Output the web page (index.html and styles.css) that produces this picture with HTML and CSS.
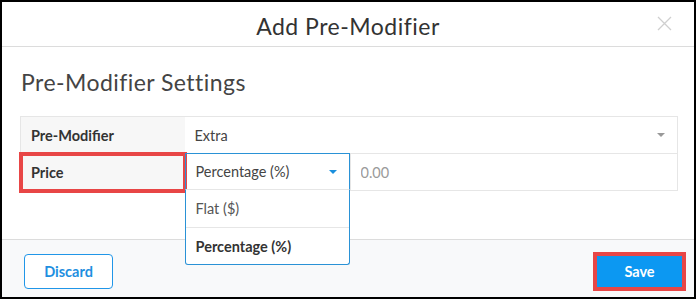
FILE: index.html
```html
<!DOCTYPE html>
<html>

<head>
  <meta charset="UTF-8">
  <meta name="viewport" content="width=device-width, initial-scale=1">
  <title>Add Pre-Modifier</title>

  <link rel="stylesheet" href="styles.css">
</head>

<body>

  <div class="modal">
    <div class="modal-header">
      <h3 class="modal-title">Add Pre-Modifier</h3>
      <span class="close-btn">
        <svg width="15" height="15" viewBox="0 0 15 15">
          <path d="M1 1 L14 14 M14 1 L1 14" stroke="#cfcfcf" stroke-width="1.3" fill="none" />
        </svg>
      </span>
    </div>

    <div class="modal-content">
      <h4 class="section-title">Pre-Modifier Settings</h4>

      <table class="settings">
        <tr>
          <td class="label">Pre-Modifier</td>
          <td class="value" colspan="2">
            <div class="select plain">
              <span>Extra</span>
              <span class="caret"></span>
            </div>
          </td>
        </tr>
        <tr>
          <td class="label marked">Price</td>
          <td class="value type-cell">
            <div class="select open">
              <span>Percentage (%)</span>
              <span class="caret"></span>
            </div>
            <ul class="options">
              <li>Flat ($)</li>
              <li class="selected">Percentage (%)</li>
            </ul>
          </td>
          <td class="value">
            <input type="text" placeholder="0.00">
          </td>
        </tr>
      </table>
    </div>

    <div class="modal-footer">
      <button class="btn btn-outline">Discard</button>
      <button class="btn btn-primary marked">Save</button>
    </div>
  </div>

</body>

</html>
```

FILE: styles.css
```css
* {
  box-sizing: border-box;
}

body {
  margin: 0;
  font-family: "Lato", "Open Sans", sans-serif;
  color: #333;
  background: #fff;
}

.modal {
  width: 696px;
  height: 299px;
  border: 2px solid #000;
  display: flex;
  flex-direction: column;
  background: #fff;
}

.modal-header {
  position: relative;
  height: 45px;
  border-bottom: 1px solid #dcdcdc;
  display: flex;
  align-items: center;
  justify-content: center;
}

.modal-title {
  margin: 4px 0 0;
  font-size: 23px;
  letter-spacing: 0.5px;
  font-weight: 400;
  color: #333;
}

.close-btn {
  position: absolute;
  right: 22px;
  top: 14px;
  line-height: 0;
}

.modal-content {
  position: relative;
  padding: 0 16px 0 18px;
}

.section-title {
  margin: 21px 0 20px 1px;
  font-size: 23px;
  letter-spacing: 0.45px;
  font-weight: 400;
  color: #444;
}

.settings {
  width: 658px;
  border-collapse: collapse;
  border: 1px solid #e6e6e6;
  font-size: 14.5px;
}

.settings td {
  height: 36px;
  border-bottom: 1px solid #e6e6e6;
  padding: 0;
}

.settings td.label {
  width: 164px;
  padding-left: 10px;
  background: #f7f7f7;
  font-weight: 700;
  color: #333;
}

.marked {
  outline: 4px solid #e84646;
  outline-offset: -2px;
}

.select {
  display: flex;
  align-items: center;
  justify-content: space-between;
  height: 36px;
  padding: 0 12px 0 10px;
  color: #444;
}

.caret {
  width: 0;
  height: 0;
  border-left: 4px solid transparent;
  border-right: 4px solid transparent;
  border-top: 4px solid #999;
}

.type-cell {
  position: relative;
  width: 165px;
}

.select.open {
  border: 1px solid #2a92d6;
  border-bottom-color: #e6e6e6;
  height: 37px;
  margin: -1px 0 0;
}

.select.open .caret {
  border-top-color: #1a8fdd;
}

.options {
  position: absolute;
  left: 0;
  right: 0;
  top: 36px;
  margin: 0;
  padding: 0;
  list-style: none;
  background: #fff;
  border: 1px solid #2a92d6;
  border-top: none;
  border-radius: 0 0 3px 3px;
  z-index: 2;
}

.options li {
  height: 37px;
  line-height: 37px;
  padding-left: 10px;
  color: #555;
}

.options li + li {
  border-top: 1px solid #e6e6e6;
}

.options li.selected {
  font-weight: 700;
  color: #333;
}

.settings input {
  width: 100%;
  height: 36px;
  border: none;
  border-left: 1px solid #e6e6e6;
  outline: 0;
  padding: 0 10px;
  font-family: inherit;
  font-size: 14.5px;
}

.settings input::placeholder {
  color: #9a9a9a;
}

.modal-footer {
  margin-top: auto;
  height: 58px;
  border-top: 1px solid #dcdcdc;
  background: #f8f9fa;
  display: flex;
  align-items: flex-start;
  justify-content: space-between;
  padding: 14px 10px 0 22px;
}

.btn {
  height: 35px;
  width: 89px;
  border-radius: 4px;
  font-family: inherit;
  font-size: 14.5px;
  font-weight: 700;
}

.btn-outline {
  background: #fff;
  border: 1px solid #2096e8;
  color: #1f8fe0;
}

.btn-primary {
  background: #0c98f2;
  border: none;
  border-radius: 0;
  color: #fff;
}
```
